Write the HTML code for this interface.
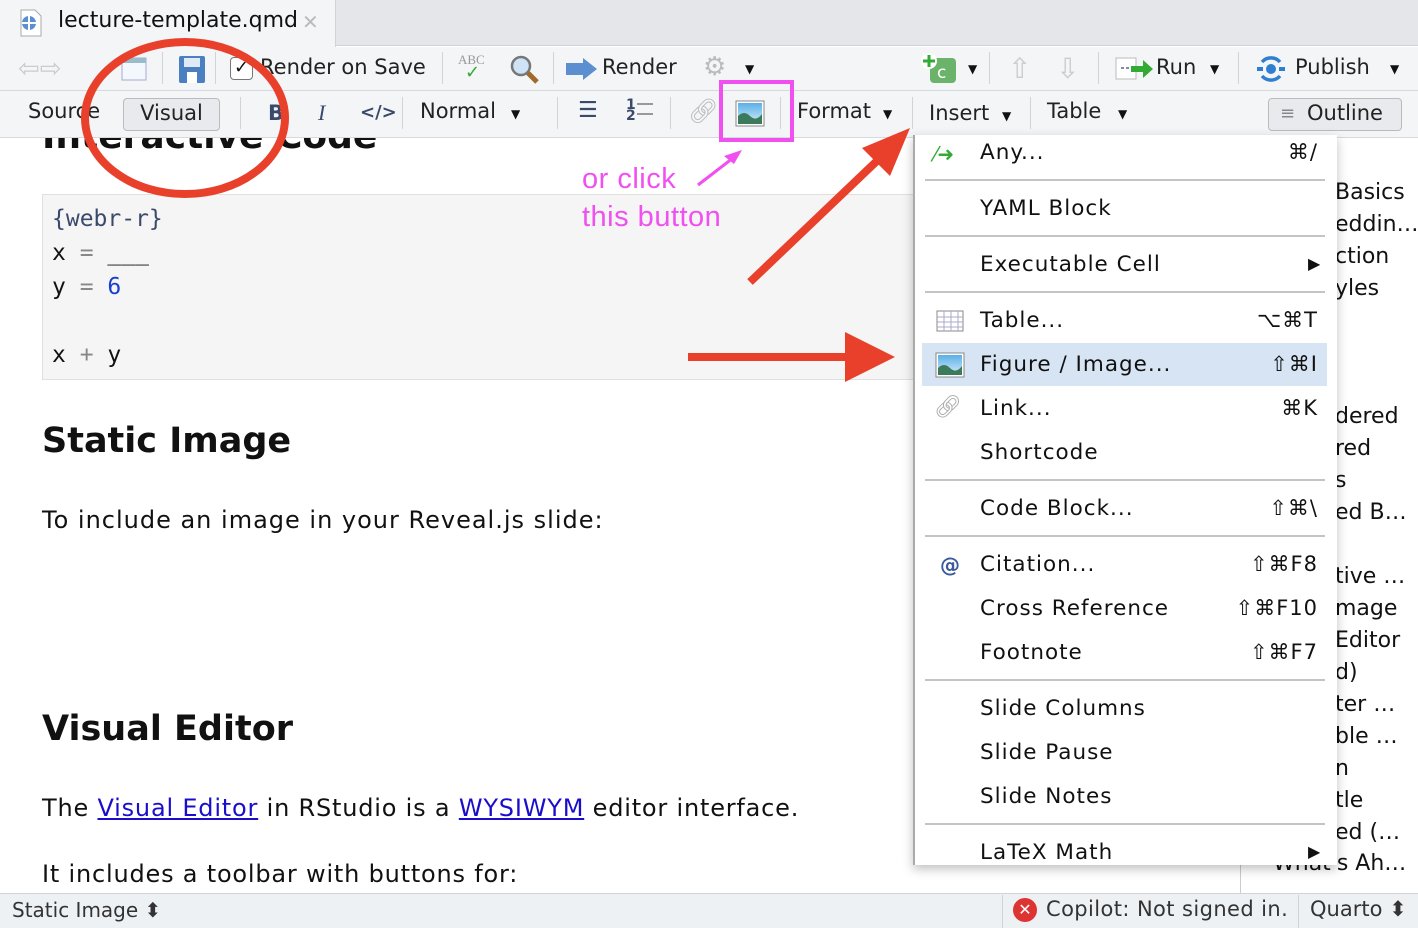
<!DOCTYPE html>
<html><head><meta charset="utf-8"><style>
*{margin:0;padding:0;box-sizing:border-box}
body{width:1418px;height:928px;overflow:hidden;position:relative;background:#fff;font-family:"DejaVu Sans","Liberation Sans",sans-serif;color:#111}
.a{position:absolute;white-space:nowrap}
.tb{font-size:21px;color:#222}
.m{font-size:21.5px;color:#111;letter-spacing:1px}
.sc{font-size:21px;color:#111;text-align:right;width:120px;letter-spacing:1px}
.sep{position:absolute;left:925px;width:400px;height:2px;background:#c4c4c4}
.vs{position:absolute;width:1px;background:#d0d4d8}
a{color:#1a0dcc}
</style></head><body>
<!-- tab bar -->
<div class="a" style="left:0;top:0;width:1418px;height:46px;background:#e4e6e9;border-bottom:1px solid #cfd3d7"></div>
<div class="a" style="left:0;top:0;width:336px;height:47px;background:#f3f5f7;border-right:1px solid #cfd3d7"></div>
<svg class="a" style="left:18px;top:8px" width="26" height="30"><path d="M3 2h14l6 6v20H3z" fill="#fff" stroke="#aaa"/><circle cx="11" cy="15" r="7" fill="#5b8fd0"/><path d="M11 8v14M4 15h14" stroke="#fff" stroke-width="2"/></svg>
<div class="a tb" style="left:58px;top:8px;font-size:22px;color:#111">lecture-template.qmd</div>
<div class="a" style="left:302px;top:10px;font-size:20px;color:#bbb">✕</div>
<!-- toolbar 1 -->
<div class="a" style="left:0;top:47px;width:1418px;height:44px;background:#f3f5f7;border-bottom:1px solid #d6dade"></div>
<div class="a" style="left:18px;top:54px;font-size:26px;color:#ccc">⇦⇨</div>
<svg class="a" style="left:118px;top:56px" width="30" height="26"><rect x="4" y="2" width="24" height="22" fill="#f3f8ff" stroke="#aac"/><rect x="4" y="2" width="24" height="5" fill="#9bc"/></svg>
<svg class="a" style="left:178px;top:55px" width="30" height="30"><rect x="1" y="1" width="26" height="27" rx="2" fill="#4a7fc1"/><rect x="6" y="3" width="16" height="9" fill="#dfeaf6"/><rect x="9" y="17" width="10" height="11" fill="#fff"/></svg>
<div class="a" style="left:230px;top:57px;width:23px;height:23px;border:1.5px solid #777;border-radius:4px;background:#fff;font-size:18px;line-height:20px;text-align:center">✓</div>
<div class="a tb" style="left:260px;top:55px">Render on Save</div>
<div class="a" style="left:458px;top:52px;font-size:13px;color:#999;font-family:'Liberation Serif',serif">ABC</div>
<div class="a" style="left:465px;top:62px;font-size:18px;color:#3a3">✓</div>
<svg class="a" style="left:508px;top:53px" width="32" height="32"><circle cx="13" cy="13" r="9" fill="#cfe3f7" stroke="#777" stroke-width="2.5"/><path d="M20 20l9 9" stroke="#a06a2a" stroke-width="5"/></svg>
<svg class="a" style="left:565px;top:57px" width="34" height="24"><rect x="1" y="6" width="20" height="12" fill="#5b8fd0"/><path d="M18 1l14 11-14 11z" fill="#5b8fd0"/></svg>
<div class="a tb" style="left:602px;top:55px">Render</div>
<div class="a" style="left:703px;top:52px;font-size:26px;color:#bbb">⚙</div>
<div class="a" style="left:745px;top:62px;font-size:12px">▼</div>
<svg class="a" style="left:920px;top:52px" width="38" height="32"><rect x="10" y="6" width="26" height="25" rx="4" fill="#6bb26b"/><text x="17" y="26" font-size="17" fill="#fff" font-family="DejaVu Sans">c</text><circle cx="9" cy="9" r="8" fill="#fff"/><path d="M9 3v12M3 9h12" stroke="#3a3" stroke-width="3"/></svg>
<div class="a" style="left:968px;top:62px;font-size:12px">▼</div>
<div class="a" style="left:1008px;top:52px;font-size:28px;color:#ccc">⇧</div>
<div class="a" style="left:1056px;top:52px;font-size:28px;color:#ccc">⇩</div>
<svg class="a" style="left:1115px;top:57px" width="40" height="24"><rect x="1" y="1" width="20" height="21" fill="#fff" stroke="#bbb"/><path d="M6 11h10" stroke="#88a" stroke-width="2" stroke-dasharray="3 2"/><path d="M16 9h12v-6l10 9-10 9v-6H16z" fill="#3a3"/></svg>
<div class="a tb" style="left:1156px;top:55px">Run</div>
<div class="a" style="left:1210px;top:62px;font-size:12px">▼</div>
<svg class="a" style="left:1253px;top:54px" width="36" height="30"><circle cx="18" cy="15" r="5" fill="#2f7fd0"/><path d="M4 15h6M26 15h6" stroke="#2f7fd0" stroke-width="4"/><path d="M9 8a12 12 0 0 1 18 0M9 22a12 12 0 0 0 18 0" stroke="#2f7fd0" stroke-width="3.5" fill="none"/></svg>
<div class="a tb" style="left:1295px;top:55px">Publish</div>
<div class="a" style="left:1390px;top:62px;font-size:12px">▼</div>
<div class="vs" style="left:215px;top:52px;height:32px"></div><div class="vs" style="left:162px;top:52px;height:32px"></div>
<div class="vs" style="left:442px;top:52px;height:32px"></div><div class="vs" style="left:553px;top:52px;height:32px"></div>
<div class="vs" style="left:989px;top:52px;height:32px"></div><div class="vs" style="left:1098px;top:52px;height:32px"></div><div class="vs" style="left:1238px;top:52px;height:32px"></div>
<!-- toolbar 2 -->
<div class="a" style="left:0;top:91px;width:1418px;height:47px;background:#f3f5f7;border-bottom:1px solid #d6dade"></div>
<div class="a tb" style="left:28px;top:99px">Source</div>
<div class="a tb" style="left:123px;top:98px;width:97px;height:33px;border:1px solid #bbb;border-radius:4px;background:#e8eaed;text-align:center;line-height:29px">Visual</div>
<div class="a" style="left:268px;top:101px;font-size:21px;font-weight:bold;color:#3b4a6b">B</div>
<div class="a" style="left:318px;top:100px;font-size:22px;font-style:italic;color:#3b4a6b;font-family:'Liberation Serif',serif">I</div>
<div class="a" style="left:360px;top:102px;font-size:18px;color:#3b4a6b;font-weight:bold">&lt;/&gt;</div>
<div class="a tb" style="left:420px;top:99px">Normal</div>
<div class="a" style="left:511px;top:107px;font-size:12px">▼</div>
<div class="a" style="left:578px;top:98px;font-size:22px;color:#3b4a6b">☰</div>
<div class="a" style="left:626px;top:100px;font-size:14px;color:#3b4a6b;line-height:11px;font-weight:bold">1<br>2</div>
<div class="a" style="left:637px;top:103px;width:16px;height:2px;background:#999;box-shadow:0 10px 0 #999"></div>
<div class="a" style="left:688px;top:97px;font-size:24px;color:#bbb">🔗︎</div>
<svg class="a" style="left:735px;top:100px" width="30" height="27"><defs><linearGradient id="g" x1="0" y1="0" x2="0" y2="1"><stop offset="0" stop-color="#5ab0e8"/><stop offset="1" stop-color="#d8ecf8"/></linearGradient></defs><rect x="1" y="1" width="28" height="25" fill="#fff" stroke="#888"/><rect x="3" y="3" width="24" height="21" fill="url(#g)"/><path d="M3 16q6-6 12 0t12-2v10H3z" fill="#3b7a5a"/></svg>
<div class="a tb" style="left:797px;top:99px">Format</div>
<div class="a" style="left:883px;top:107px;font-size:12px">▼</div>
<div class="a tb" style="left:929px;top:101px">Insert</div>
<div class="a" style="left:1002px;top:109px;font-size:12px">▼</div>
<div class="a tb" style="left:1047px;top:99px">Table</div>
<div class="a" style="left:1118px;top:107px;font-size:12px">▼</div>
<div class="a tb" style="left:1268px;top:98px;width:134px;height:33px;border:1px solid #bbb;border-radius:4px;background:#e8eaed;line-height:29px;padding-left:38px">Outline</div>
<div class="a" style="left:1280px;top:103px;font-size:18px;color:#888">≡</div>
<div class="vs" style="left:240px;top:97px;height:32px"></div><div class="vs" style="left:402px;top:97px;height:32px"></div><div class="vs" style="left:557px;top:97px;height:32px"></div><div class="vs" style="left:670px;top:97px;height:32px"></div><div class="vs" style="left:780px;top:97px;height:32px"></div><div class="vs" style="left:912px;top:97px;height:32px"></div><div class="vs" style="left:1030px;top:97px;height:32px"></div>
<!-- content -->
<div class="a" style="left:0;top:138px;width:1240px;height:755px;overflow:hidden">
<div class="a" style="left:42px;top:-22px;font-size:36px;font-weight:bold">Interactive Code</div>
<div class="a" style="left:42px;top:56px;width:872px;height:186px;background:#f5f5f5;border:1px solid #e0e0e0"></div>
<div class="a" style="left:52px;top:64px;font-family:'DejaVu Sans Mono',monospace;font-size:23px;line-height:34px;color:#111">
<span style="color:#3b4a6b">{webr-r}</span><br>x <span style="color:#888">=</span> ___<br>y <span style="color:#888">=</span> <span style="color:#1a3fd0">6</span><br><br>x <span style="color:#888">+</span> y</div>
<div class="a" style="left:42px;top:283px;font-size:35px;font-weight:bold">Static Image</div>
<div class="a" style="left:42px;top:368px;font-size:24px;letter-spacing:1px">To include an image in your Reveal.js slide:</div>
<div class="a" style="left:42px;top:571px;font-size:35px;font-weight:bold">Visual Editor</div>
<div class="a" style="left:42px;top:656px;font-size:24px;letter-spacing:0.8px">The <a href="#x">Visual Editor</a> in RStudio is a <a href="#x">WYSIWYM</a> editor interface.</div>
<div class="a" style="left:42px;top:722px;font-size:24px;letter-spacing:0.8px">It includes a toolbar with buttons for:</div>
</div>
<div class="a" style="left:1240px;top:138px;width:1px;height:755px;background:#ccc"></div>
<div class="a" style="left:1241px;top:138px;width:177px;height:755px;overflow:hidden;font-size:22px;line-height:32px">
<div class="a" style="left:94px;top:39px;line-height:32px">Basics<br>eddin…<br>ction<br>yles<br><br><br><br>dered<br>red<br>s<br>ed B…<br><br>tive …<br>mage<br>Editor<br>d)<br>ter …<br>ble …<br>n<br>tle<br>ed (…</div>
<div class="a" style="left:32px;top:710px">What's Ah…</div>
</div>
<!-- status bar -->
<div class="a" style="left:0;top:893px;width:1418px;height:35px;background:#eef1f4;border-top:1px solid #d0d4d8"></div>
<div class="a" style="left:12px;top:898px;font-size:20px;color:#333">Static Image ⬍</div>
<div class="vs" style="left:1002px;top:895px;height:33px"></div><div class="vs" style="left:1298px;top:895px;height:33px"></div>
<div class="a" style="left:1013px;top:898px;width:24px;height:24px;border-radius:50%;background:#d33;color:#fff;font-size:16px;line-height:24px;text-align:center;font-weight:bold">✕</div>
<div class="a" style="left:1046px;top:897px;font-size:21px;color:#333;letter-spacing:0.4px">Copilot: Not signed in.</div>
<div class="a" style="left:1310px;top:897px;font-size:21px;color:#333">Quarto ⬍</div>
<!-- menu -->
<div class="a" style="left:913px;top:135px;width:424px;height:730px;background:#fff;border-left:2px solid #aaa;box-shadow:0 4px 10px rgba(0,0,0,.25)"></div>
<div class="a" style="left:922px;top:343px;width:405px;height:43px;background:#d6e4f3"></div>
<div class="a" style="left:934px;top:142px;font-size:20px;color:#3a3">⁄➜</div>
<div class="a m" style="left:980px;top:140px">Any...</div><div class="a sc" style="left:1198px;top:140px">⌘/</div>
<div class="sep" style="top:179px"></div>
<div class="a m" style="left:980px;top:196px">YAML Block</div>
<div class="sep" style="top:235px"></div>
<div class="a m" style="left:980px;top:252px">Executable Cell</div><div class="a" style="left:1308px;top:254px;font-size:16px">▶</div>
<div class="sep" style="top:291px"></div>
<svg class="a" style="left:936px;top:310px" width="28" height="22"><rect x="1" y="1" width="26" height="20" fill="#fff" stroke="#888"/><path d="M1 7h26M1 12h26M1 17h26M8 1v20M15 1v20M22 1v20" stroke="#aac" /></svg>
<div class="a m" style="left:980px;top:308px">Table...</div><div class="a sc" style="left:1198px;top:308px">⌥⌘T</div>
<svg class="a" style="left:935px;top:352px" width="30" height="26"><rect x="1" y="1" width="28" height="24" fill="#fff" stroke="#888"/><rect x="3" y="3" width="24" height="20" fill="url(#g)"/><path d="M3 16q6-6 12 0t12-2v9H3z" fill="#3b7a5a"/></svg>
<div class="a m" style="left:980px;top:352px">Figure / Image...</div><div class="a sc" style="left:1198px;top:352px">⇧⌘I</div>
<div class="a" style="left:934px;top:395px;font-size:22px;color:#aaa">🔗︎</div>
<div class="a m" style="left:980px;top:396px">Link...</div><div class="a sc" style="left:1198px;top:396px">⌘K</div>
<div class="a m" style="left:980px;top:440px">Shortcode</div>
<div class="sep" style="top:479px"></div>
<div class="a m" style="left:980px;top:496px">Code Block...</div><div class="a sc" style="left:1198px;top:496px">⇧⌘\</div>
<div class="sep" style="top:535px"></div>
<div class="a" style="left:940px;top:553px;font-size:20px;color:#3b5a9b;font-weight:bold">@</div>
<div class="a m" style="left:980px;top:552px">Citation...</div><div class="a sc" style="left:1198px;top:552px">⇧⌘F8</div>
<div class="a m" style="left:980px;top:596px">Cross Reference</div><div class="a sc" style="left:1198px;top:596px">⇧⌘F10</div>
<div class="a m" style="left:980px;top:640px">Footnote</div><div class="a sc" style="left:1198px;top:640px">⇧⌘F7</div>
<div class="sep" style="top:679px"></div>
<div class="a m" style="left:980px;top:696px">Slide Columns</div>
<div class="a m" style="left:980px;top:740px">Slide Pause</div>
<div class="a m" style="left:980px;top:784px">Slide Notes</div>
<div class="sep" style="top:823px"></div>
<div class="a" style="left:913px;top:830px;width:424px;height:35px;overflow:hidden"><div class="a m" style="left:67px;top:10px">LaTeX Math</div><div class="a" style="left:395px;top:12px;font-size:16px">▶</div></div>
<!-- annotations -->
<svg class="a" style="left:0;top:0" width="1418" height="928">
<ellipse cx="185" cy="118" rx="100" ry="76" fill="none" stroke="#e8402a" stroke-width="8"/>
<rect x="721" y="82" width="71" height="58" fill="none" stroke="#f050f0" stroke-width="4"/>
<path d="M698 185L733 158" stroke="#f050f0" stroke-width="3"/><path d="M742 150l-18 6 10 8z" fill="#f050f0"/>
<path d="M750 282L880 158" stroke="#e8402a" stroke-width="8"/><path d="M910 128l-48 20 28 28z" fill="#e8402a"/>
<path d="M688 357H850" stroke="#e8402a" stroke-width="8"/><path d="M895 357l-50-25v50z" fill="#e8402a"/>
</svg>
<div class="a" style="left:582px;top:160px;font-size:29px;color:#f050f0;font-family:'Liberation Sans',sans-serif;line-height:38px;letter-spacing:0.5px">or click<br>this button</div>
</body></html>
